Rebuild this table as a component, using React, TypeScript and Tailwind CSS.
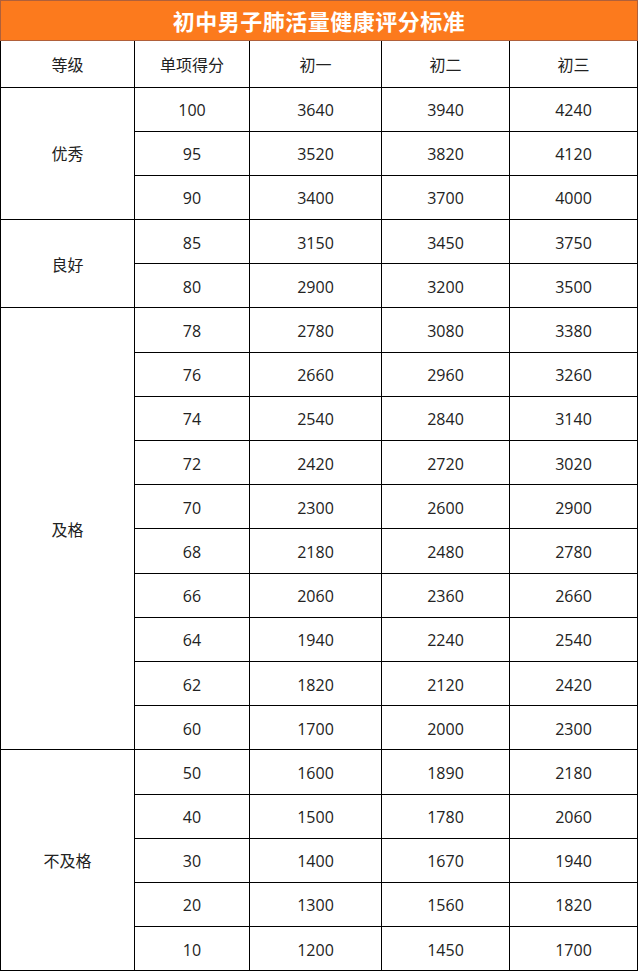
import React from "react";

type Group = { level: string; rows: [number, number, number, number][] };

const groups: Group[] = [
  {
    level: "优秀",
    rows: [
      [100, 3640, 3940, 4240],
      [95, 3520, 3820, 4120],
      [90, 3400, 3700, 4000],
    ],
  },
  {
    level: "良好",
    rows: [
      [85, 3150, 3450, 3750],
      [80, 2900, 3200, 3500],
    ],
  },
  {
    level: "及格",
    rows: [
      [78, 2780, 3080, 3380],
      [76, 2660, 2960, 3260],
      [74, 2540, 2840, 3140],
      [72, 2420, 2720, 3020],
      [70, 2300, 2600, 2900],
      [68, 2180, 2480, 2780],
      [66, 2060, 2360, 2660],
      [64, 1940, 2240, 2540],
      [62, 1820, 2120, 2420],
      [60, 1700, 2000, 2300],
    ],
  },
  {
    level: "不及格",
    rows: [
      [50, 1600, 1890, 2180],
      [40, 1500, 1780, 2060],
      [30, 1400, 1670, 1940],
      [20, 1300, 1560, 1820],
      [10, 1200, 1450, 1700],
    ],
  },
];

const cell = "border-[1.5px] border-black text-center align-middle pt-[2px] p-0";

export default function App() {
  return (
    <div
      className="w-[640px] h-[972px] bg-white text-[#222] text-[16px]"
      style={{ fontFamily: '"Open Sans", "Noto Sans CJK SC", sans-serif' }}
    >
      <div className="w-[638px]">
        {/* title bar */}
        <div
          className="h-[41px] bg-[#fc7a1d] border border-[#b0603a] flex items-center justify-center text-white font-bold text-[22px] tracking-[0.5px]"
          style={{ fontFamily: '"Noto Sans CJK SC", sans-serif' }}
        >
          初中男子肺活量健康评分标准
        </div>

        <table className="w-[638px] border-collapse table-fixed">
          <colgroup>
            <col className="w-[134px]" />
            <col className="w-[115px]" />
            <col className="w-[132px]" />
            <col className="w-[128px]" />
            <col />
          </colgroup>
          <thead>
            <tr className="h-[46px]">
              <th className={`${cell} border-t-0 font-normal`}>等级</th>
              <th className={`${cell} border-t-0 font-normal`}>单项得分</th>
              <th className={`${cell} border-t-0 font-normal`}>初一</th>
              <th className={`${cell} border-t-0 font-normal`}>初二</th>
              <th className={`${cell} border-t-0 font-normal`}>初三</th>
            </tr>
          </thead>
          <tbody>
            {groups.map((g) =>
              g.rows.map((r, i) => (
                <tr key={`${g.level}-${i}`} className="h-[44.2px]">
                  {i === 0 && (
                    <td className={cell} rowSpan={g.rows.length}>
                      {g.level}
                    </td>
                  )}
                  {r.map((v, j) => (
                    <td key={j} className={cell}>
                      {v}
                    </td>
                  ))}
                </tr>
              ))
            )}
          </tbody>
        </table>
      </div>
    </div>
  );
}
